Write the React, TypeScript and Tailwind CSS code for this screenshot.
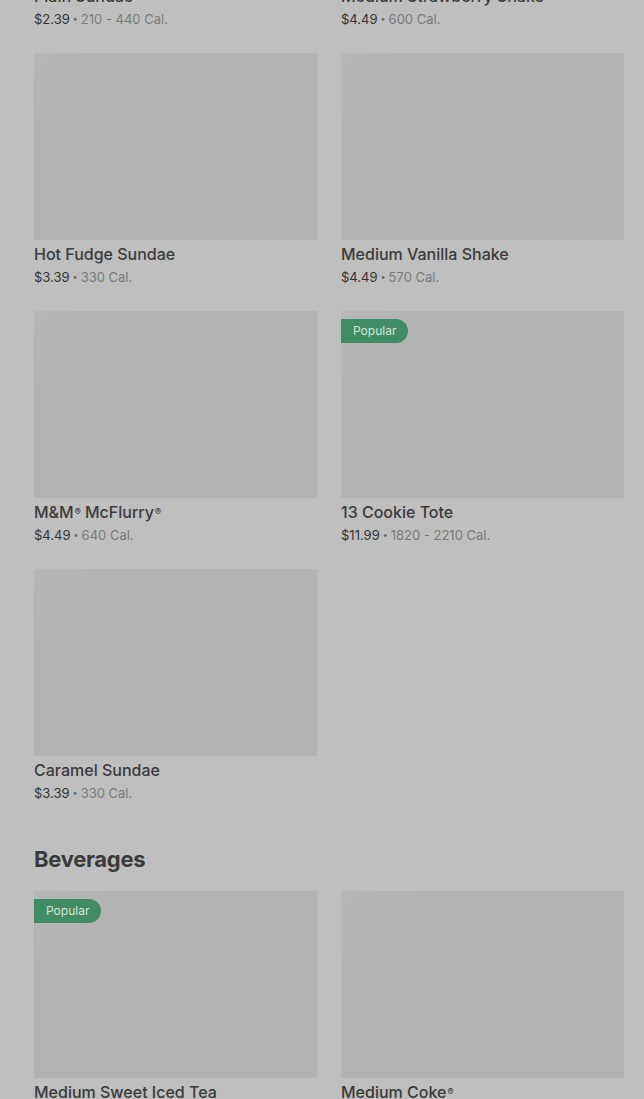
import React from "react";

type Item = { name: React.ReactNode; key: string; price: string; cal: string; popular?: boolean };

const R = () => <sup className="text-[9px] relative -top-[3px] ml-[1px]">®</sup>;

const desserts: Item[] = [
  { key: "a", name: "Plain Sundae", price: "$2.39", cal: "210 - 440 Cal." },
  { key: "b", name: "Medium Strawberry Shake", price: "$4.49", cal: "600 Cal." },
  { key: "c", name: "Hot Fudge Sundae", price: "$3.39", cal: "330 Cal." },
  { key: "d", name: "Medium Vanilla Shake", price: "$4.49", cal: "570 Cal." },
  {
    key: "e",
    name: (
      <>
        M&amp;M<R /> McFlurry<R />
      </>
    ),
    price: "$4.49",
    cal: "640 Cal.",
  },
  { key: "f", name: "13 Cookie Tote", price: "$11.99", cal: "1820 - 2210 Cal.", popular: true },
  { key: "g", name: "Caramel Sundae", price: "$3.39", cal: "330 Cal." },
];

const beverages: Item[] = [
  { key: "h", name: "Medium Sweet Iced Tea", price: "$1.99", cal: "150 Cal.", popular: true },
  {
    key: "i",
    name: (
      <>
        Medium Coke<R />
      </>
    ),
    price: "$1.89",
    cal: "200 Cal.",
  },
];

function Card({ item }: { item: Item }) {
  return (
    <div className="flex flex-col">
      <div className="relative h-[187px] bg-[#b3b3b3] bg-gradient-to-br from-[#b7b7b7] via-[#b3b3b3] via-[20%] to-[#b3b3b3]">
        {item.popular && (
          <div className="absolute left-0 top-[8px] flex h-[24px] items-center rounded-r-full bg-[#3f8c65] pl-[12px] pr-[12px] text-[12px] text-[#d6e6dc]">
            Popular
          </div>
        )}
      </div>
      <div className="mt-[3px] text-[16px] leading-[22px] font-medium text-[#3a3a3a]">{item.name}</div>
      <div className="mt-[2px] text-[13px] leading-[20px] flex items-center">
        <span className="text-[#333333]">{item.price}</span>
        <span className="mx-[3px] text-[#6a6a6a] text-[9px]">•</span>
        <span className="text-[#7a7a7a]">{item.cal}</span>
      </div>
    </div>
  );
}

export default function App() {
  return (
    <div
      className="h-[1099px] w-[644px] overflow-hidden bg-[#bfbfbf]"
      style={{ fontFamily: "Inter, Roboto, 'Noto Sans', sans-serif" }}
    >
      <div className="-mt-[205px] pl-[34px] pr-[20px]">
        <div className="grid grid-cols-2 gap-x-[24px] gap-y-[24px]">
          {desserts.map((d) => (
            <Card key={d.key} item={d} />
          ))}
        </div>
        <h2 className="mt-[42px] mb-[18px] text-[22px] leading-[28px] font-bold tracking-[-0.3px] text-[#3a3a3a]">
          Beverages
        </h2>
        <div className="grid grid-cols-2 gap-x-[24px] gap-y-[24px]">
          {beverages.map((d) => (
            <Card key={d.key} item={d} />
          ))}
        </div>
      </div>
    </div>
  );
}
